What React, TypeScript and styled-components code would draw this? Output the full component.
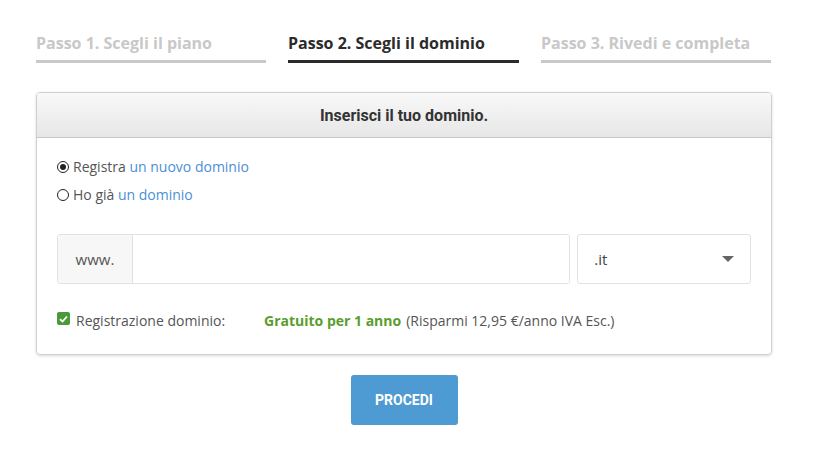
import React from "react";
import styled, { createGlobalStyle } from "styled-components";

const Global = createGlobalStyle`
  html, body { margin: 0; padding: 0; background: #fff; }
  body { font-family: "Open Sans", "Liberation Sans", sans-serif; color: #555; }
  * { box-sizing: border-box; }
`;

const Page = styled.div`
  width: 736px;
  margin: 0 0 0 36px;
  padding-top: 32px;
`;

const Steps = styled.div`
  display: grid;
  grid-template-columns: 230px 231px 230px;
  column-gap: 22px;
`;

const Step = styled.div<{ $active?: boolean }>`
  font-family: "Open Sans", sans-serif;
  font-weight: 700;
  font-size: 16px;
  line-height: 23px;
  color: ${(p) => (p.$active ? "#2b2b2b" : "#c8c8c8")};
  padding-bottom: 5px;
  border-bottom: 3px solid ${(p) => (p.$active ? "#2b2b2b" : "#c9c9c9")};
`;

const Card = styled.div`
  margin-top: 29px;
  border: 1px solid #d0d0d0;
  border-radius: 4px;
  box-shadow: 0 1px 3px rgba(0, 0, 0, 0.15);
  overflow: hidden;
`;

const CardHeader = styled.div`
  height: 45px;
  display: flex;
  align-items: center;
  justify-content: center;
  background: linear-gradient(#f8f8f8, #e7e7e7);
  border-bottom: 1px solid #c6c6c6;
  font-family: Roboto, sans-serif;
  font-weight: 700;
  font-size: 16px;
  color: #333;
`;

const CardBody = styled.div`
  padding: 15px 20px 24px 20px;
`;

const RadioRow = styled.label`
  display: flex;
  align-items: center;
  gap: 4px;
  font-size: 14px;
  line-height: 28px;
  color: #555;
`;

const Radio = styled.span<{ $checked?: boolean }>`
  width: 12px;
  height: 12px;
  border-radius: 50%;
  border: 1.5px solid #222;
  display: inline-flex;
  align-items: center;
  justify-content: center;
  &::after {
    content: "";
    width: 6px;
    height: 6px;
    border-radius: 50%;
    background: ${(p) => (p.$checked ? "#222" : "transparent")};
  }
`;

const Link = styled.span`
  color: #4a8fd6;
`;

const InputRow = styled.div`
  margin-top: 25px;
  display: flex;
  gap: 7px;
  height: 50px;
`;

const InputGroup = styled.div`
  display: flex;
  width: 514px;
  border: 1px solid #e2e2e2;
  border-radius: 3px;
  overflow: hidden;
`;

const Addon = styled.div`
  width: 75px;
  background: #f7f7f7;
  border-right: 1px solid #e2e2e2;
  display: flex;
  align-items: center;
  justify-content: center;
  font-size: 15px;
  color: #555;
`;

const TextInput = styled.div`
  flex: 1;
  background: #fff;
`;

const Select = styled.div`
  width: 174px;
  border: 1px solid #e2e2e2;
  border-radius: 3px;
  display: flex;
  align-items: center;
  justify-content: space-between;
  padding: 0 16px 0 16px;
  font-size: 15px;
  color: #444;
`;

const Caret = styled.span`
  width: 0;
  height: 0;
  border-left: 6px solid transparent;
  border-right: 6px solid transparent;
  border-top: 6px solid #666;
`;

const CheckRow = styled.div`
  margin-top: 27px;
  display: flex;
  align-items: center;
  font-size: 14px;
  color: #555;
`;

const Check = styled.span`
  width: 13px;
  height: 13px;
  border-radius: 2px;
  background: #4a9a3a;
  display: inline-flex;
  align-items: center;
  justify-content: center;
  margin-right: 6px;
  margin-top: -4px;
`;

const Label = styled.span`
  width: 188px;
`;

const Free = styled.span`
  color: #5a9d2e;
  font-weight: 700;
  margin-right: 5px;
`;

const ButtonRow = styled.div`
  display: flex;
  justify-content: center;
  margin-top: 20px;
`;

const Button = styled.button`
  width: 107px;
  height: 50px;
  border: none;
  border-radius: 3px;
  background: #4e9ad3;
  color: #fff;
  font-family: Roboto, sans-serif;
  font-weight: 700;
  font-size: 14px;
  cursor: pointer;
`;

export default function App() {
  return (
    <>
      <Global />
      <Page>
        <Steps>
          <Step>Passo 1. Scegli il piano</Step>
          <Step $active>Passo 2. Scegli il dominio</Step>
          <Step>Passo 3. Rivedi e completa</Step>
        </Steps>
        <Card>
          <CardHeader>Inserisci il tuo dominio.</CardHeader>
          <CardBody>
            <RadioRow>
              <Radio $checked />
              <span>
                Registra <Link>un nuovo dominio</Link>
              </span>
            </RadioRow>
            <RadioRow>
              <Radio />
              <span>
                Ho già <Link>un dominio</Link>
              </span>
            </RadioRow>
            <InputRow>
              <InputGroup>
                <Addon>www.</Addon>
                <TextInput />
              </InputGroup>
              <Select>
                <span>.it</span>
                <Caret />
              </Select>
            </InputRow>
            <CheckRow>
              <Check>
                <svg width="9" height="8" viewBox="0 0 9 8">
                  <path d="M1 4.2 L3.5 6.5 L8 1.5" fill="none" stroke="#fff" strokeWidth="1.8" />
                </svg>
              </Check>
              <Label>Registrazione dominio:</Label>
              <Free>Gratuito per 1 anno</Free>
              <span>(Risparmi 12,95 €/anno IVA Esc.)</span>
            </CheckRow>
          </CardBody>
        </Card>
        <ButtonRow>
          <Button>PROCEDI</Button>
        </ButtonRow>
      </Page>
    </>
  );
}
